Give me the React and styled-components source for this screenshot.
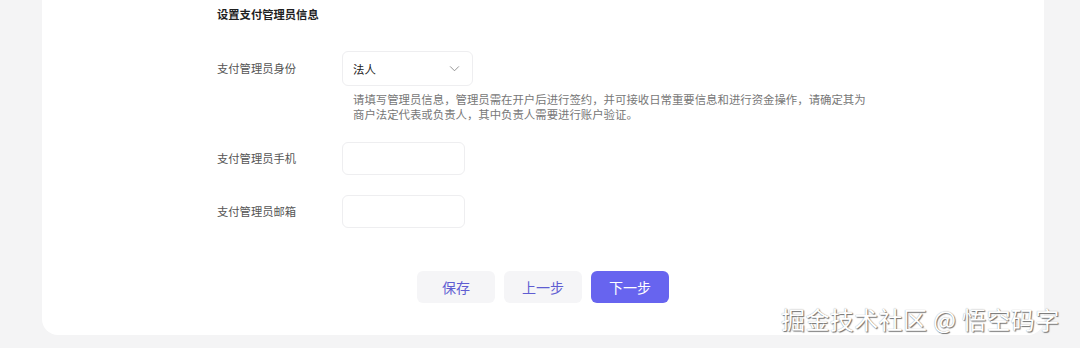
import React from 'react';
import styled, { createGlobalStyle } from 'styled-components';

const GlobalStyle = createGlobalStyle`
	html, body {
		margin: 0;
		padding: 0;
		background: #f4f4f5;
		font-family: "Noto Sans CJK SC", "Noto Sans", sans-serif;
	}
`;

const Page = styled.div`
	position: relative;
	width: 1080px;
	height: 348px;
	overflow: hidden;
`;

const Card = styled.div`
	margin-left: 42px;
	width: 1002px;
	background: #fff;
	border-radius: 0 0 16px 16px;
	padding: 5px 0 32px 175px;
	box-sizing: border-box;
`;

const Heading = styled.h3`
	margin: 0 0 28px;
	font-size: 11.3px;
	line-height: 18px;
	font-weight: 700;
	color: #1f1f1f;
`;

const Row = styled.div`
	display: flex;
	align-items: flex-start;
	margin-bottom: ${(p) => p.gap || 20}px;
`;

const Label = styled.div`
	width: 125px;
	flex-shrink: 0;
	font-size: 11.3px;
	line-height: ${(p) => p.h}px;
	color: #555;
`;

const Field = styled.div`
	display: flex;
	flex-direction: column;
`;

const Select = styled.div`
	width: 131px;
	height: 35px;
	box-sizing: border-box;
	border: 1px solid #eeeef0;
	border-radius: 6px;
	display: flex;
	align-items: center;
	justify-content: space-between;
	padding: 0 12px 0 10px;
	font-size: 11.4px;
	color: #222;
`;

const Input = styled.div`
	width: 123px;
	height: 33px;
	box-sizing: border-box;
	border: 1px solid #eeeef0;
	border-radius: 6px;
`;

const Help = styled.p`
	margin: 6px 0 0 11px;
	width: 516px;
	font-size: 11.4px;
	line-height: 15px;
	color: #777;
`;

const Actions = styled.div`
	display: flex;
	justify-content: center;
	gap: 9px;
	margin-left: -175px;
	margin-top: 43px;
`;

const Button = styled.button`
	width: 78px;
	height: 32px;
	border: none;
	border-radius: 6px;
	font-family: inherit;
	font-size: 14px;
	background: ${(p) => (p.primary ? '#6764ef' : '#f5f5f7')};
	color: ${(p) => (p.primary ? '#fff' : '#605dd2')};
`;

const Watermark = styled.div`
	position: absolute;
	left: 781px;
	top: 303px;
	font-size: 24px;
	letter-spacing: 0.4px;
	line-height: 32px;
	color: #fff;
	white-space: nowrap;
	text-shadow: 1px 1px 1px #6f6f6f, 0 0 1px #999;
`;

const Chevron = () => (
	<svg width="11" height="11" viewBox="0 0 12 12" fill="none">
		<path d="M1.5 4l4.5 4.5L10.5 4" stroke="#8a8a8a" strokeWidth="1" strokeLinecap="round" strokeLinejoin="round" />
	</svg>
);

export default function App() {
	return (
		<Page>
			<GlobalStyle />
			<Card>
				<Heading>设置支付管理员信息</Heading>
				<Row>
					<Label h={35}>支付管理员身份</Label>
					<Field>
						<Select>
							<span>法人</span>
							<Chevron />
						</Select>
						<Help>请填写管理员信息，管理员需在开户后进行签约，并可接收日常重要信息和进行资金操作，请确定其为商户法定代表或负责人，其中负责人需要进行账户验证。</Help>
					</Field>
				</Row>
				<Row>
					<Label h={33}>支付管理员手机</Label>
					<Input />
				</Row>
				<Row gap={0}>
					<Label h={33}>支付管理员邮箱</Label>
					<Input />
				</Row>
				<Actions>
					<Button>保存</Button>
					<Button>上一步</Button>
					<Button primary>下一步</Button>
				</Actions>
			</Card>
			<Watermark>掘金技术社区 @ 悟空码字</Watermark>
		</Page>
	);
}
